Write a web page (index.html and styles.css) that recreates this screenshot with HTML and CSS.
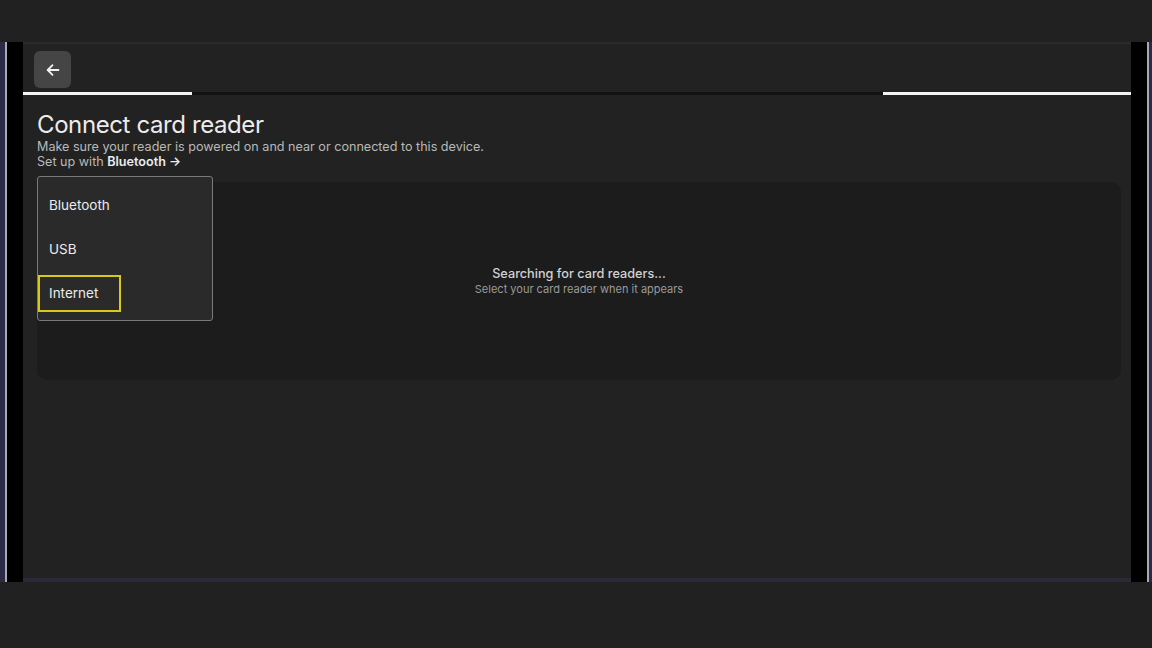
FILE: index.html
```html
<!DOCTYPE html>
<html lang="en">
  <head>
    <meta charset="UTF-8" />
    <meta name="viewport" content="width=device-width, initial-scale=1.0" />
    <title>Connect card reader</title>
    <link rel="stylesheet" href="styles.css">
  </head>
  <body>
    <div class="topbar"></div>
    <div class="device">
      <div class="bezel bezel--left">
        <span class="bezel-glow"></span><span class="bezel-edge"></span><span class="bezel-black"></span>
      </div>
      <main class="screen">
        <header class="screen-header">
          <button class="back-btn" aria-label="Back">
            <svg width="14" height="14" viewBox="0 0 14 14" fill="none" stroke="#f2f2f2" stroke-width="1.8" stroke-linecap="round" stroke-linejoin="round">
              <path d="M12.5 7H1.8" />
              <path d="M6.5 2.2L1.7 7l4.8 4.8" />
            </svg>
          </button>
        </header>
        <div class="progress">
          <span class="progress__done"></span>
          <span class="progress__rest"></span>
          <span class="progress__tail"></span>
        </div>

        <section class="content">
          <h1 class="title">Connect card reader</h1>
          <p class="subtitle">Make sure your reader is powered on and near or connected to this device.</p>
          <p class="subtitle">Set up with <a href="#" class="link">Bluetooth &rarr;</a></p>

          <div class="panel">
            <div class="panel__title">Searching for card readers...</div>
            <div class="panel__hint">Select your card reader when it appears</div>
          </div>

          <ul class="dropdown">
            <li class="dropdown__item"><span>Bluetooth</span></li>
            <li class="dropdown__item"><span>USB</span></li>
            <li class="dropdown__item dropdown__item--focus"><span>Internet</span></li>
          </ul>
        </section>
        <div class="screen-bottom"></div>
      </main>
      <div class="bezel bezel--right">
        <span class="bezel-black"></span><span class="bezel-edge"></span><span class="bezel-glow"></span>
      </div>
    </div>
  </body>
</html>
```

FILE: styles.css
```css
:root {
  --page-bg: #212121;
  --screen-bg: #222222;
  --text-primary: #ececec;
  --text-secondary: #b9b9b9;
  --focus: #d8c81a;
}
body {
  margin: 0;
  background: var(--page-bg);
  font-family: Inter, "Noto Sans", "Liberation Sans", sans-serif;
  color: var(--text-primary);
}

.topbar {
  height: 42px;
}
.device {
  display: flex;
  height: 540px;
}
.bezel {
  display: flex;
}
.bezel-glow {
  width: 5px;
  background: #2b2b45;
}
.bezel--right .bezel-glow {
  width: 3px;
}
.bezel-edge {
  width: 2px;
  background: #a9a9b4;
}
.bezel-black {
  width: 16px;
  background: #000;
}

.screen {
  flex: 1;
  display: flex;
  flex-direction: column;
  background: var(--screen-bg);
  border-top: 2px solid #2b2b2b;
}
.screen-header {
  padding: 7px 11px 4px;
}
.back-btn {
  display: flex;
  align-items: center;
  justify-content: center;
  width: 37px;
  height: 37px;
  padding: 0;
  border: 0;
  border-radius: 6px;
  background: #454545;
}
.progress {
  display: flex;
  height: 3px;
}
.progress__done {
  width: 169px;
  background: #f4f4f4;
}
.progress__rest {
  flex: 1;
  background: #121212;
}
.progress__tail {
  width: 248px;
  background: #f4f4f4;
}

.content {
  position: relative;
  flex: 1;
  padding: 15px 10px 0 14px;
}
.title {
  margin: 0;
  font-size: 24px;
  font-weight: 400;
  line-height: 29px;
  letter-spacing: -0.4px;
}
.subtitle {
  margin: 0;
  font-size: 12.6px;
  line-height: 15px;
  color: var(--text-secondary);
}
.link {
  color: var(--text-primary);
  font-weight: 600;
  text-decoration: none;
}

.panel {
  display: flex;
  flex-direction: column;
  align-items: center;
  justify-content: center;
  height: 198px;
  margin-top: 13px;
  border-radius: 10px;
  background: #1c1c1c;
}
.panel__title {
  font-size: 12.7px;
  font-weight: 500;
  line-height: 16px;
  color: #d2d2d2;
}
.panel__hint {
  font-size: 11px;
  line-height: 14px;
  color: #9a9a9a;
}

.dropdown {
  position: absolute;
  top: 81px;
  left: 14px;
  width: 176px;
  height: 145px;
  box-sizing: border-box;
  margin: 0;
  padding: 6px 0 0;
  list-style: none;
  border: 1px solid #7a7a7a;
  border-radius: 3px;
  background: #2a2a2a;
}
.dropdown__item {
  height: 44px;
  display: flex;
  align-items: center;
  font-size: 13.5px;
}
.dropdown__item span {
  display: inline-block;
  width: 83px;
  box-sizing: border-box;
  padding: 8px 9px;
  line-height: 17px;
  border: 2px solid transparent;
}
.dropdown__item--focus span {
  border-color: var(--focus);
}

.screen-bottom {
  height: 4px;
  background: #2a2a38;
}
```
